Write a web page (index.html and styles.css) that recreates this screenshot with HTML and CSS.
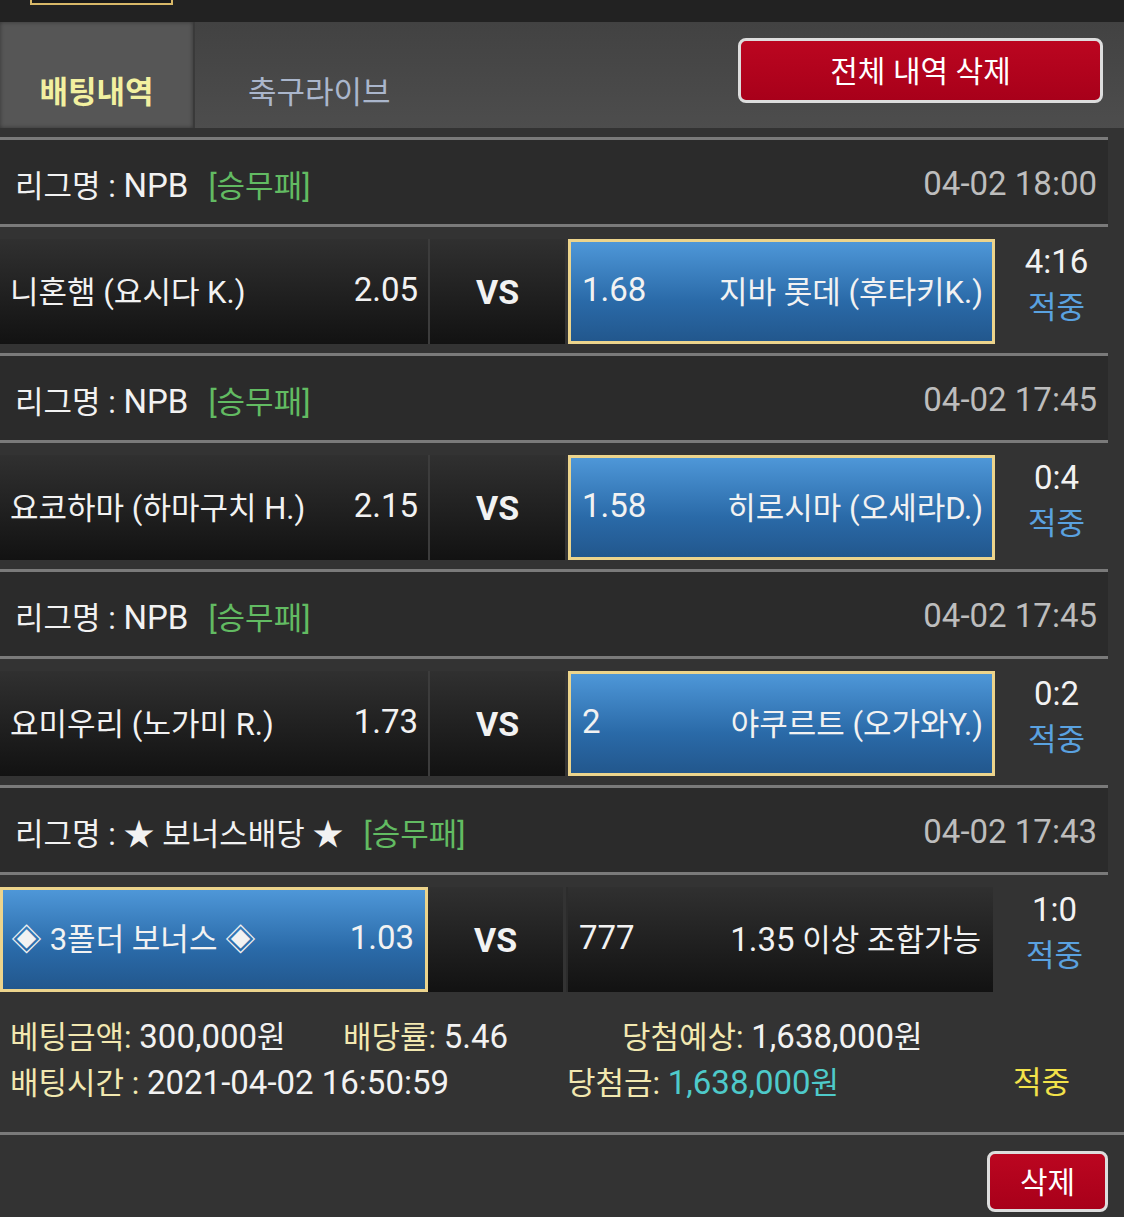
FILE: index.html
```html
<!DOCTYPE html>
<html lang="ko">
<head>
  <meta charset="UTF-8">
  <title>배팅내역</title>
  <link rel="stylesheet" href="styles.css">
</head>
<body>

<div class="topbar">
  <div class="top-box"></div>
</div>

<div class="tabs">
  <div class="tab active">배팅내역</div>
  <div class="tab">축구라이브</div>
  <button class="btn-red btn-all">전체 내역 삭제</button>
</div>

<div class="list">
  <div class="game">
    <div class="league">
      <span>리그명 : <span class="num">NPB</span></span><span class="tag">[승무패]</span>
      <span class="date num">04-02 18:00</span>
    </div>
    <div class="match">
      <div class="cell home"><span>니혼햄 (요시다 K.)</span><span class="num">2.05</span></div>
      <div class="cell vs">VS</div>
      <div class="cell away picked"><span class="num">1.68</span><span>지바 롯데 (후타키K.)</span></div>
      <div class="score"><div class="num">4:16</div><div class="hit">적중</div></div>
    </div>
  </div>

  <div class="game">
    <div class="league">
      <span>리그명 : <span class="num">NPB</span></span><span class="tag">[승무패]</span>
      <span class="date num">04-02 17:45</span>
    </div>
    <div class="match">
      <div class="cell home"><span>요코하마 (하마구치 H.)</span><span class="num">2.15</span></div>
      <div class="cell vs">VS</div>
      <div class="cell away picked"><span class="num">1.58</span><span>히로시마 (오세라D.)</span></div>
      <div class="score"><div class="num">0:4</div><div class="hit">적중</div></div>
    </div>
  </div>

  <div class="game">
    <div class="league">
      <span>리그명 : <span class="num">NPB</span></span><span class="tag">[승무패]</span>
      <span class="date num">04-02 17:45</span>
    </div>
    <div class="match">
      <div class="cell home"><span>요미우리 (노가미 R.)</span><span class="num">1.73</span></div>
      <div class="cell vs">VS</div>
      <div class="cell away picked"><span class="num">2</span><span>야쿠르트 (오가와Y.)</span></div>
      <div class="score"><div class="num">0:2</div><div class="hit">적중</div></div>
    </div>
  </div>

  <div class="game last">
    <div class="league">
      <span>리그명 : ★ 보너스배당 ★</span><span class="tag">[승무패]</span>
      <span class="date num">04-02 17:43</span>
    </div>
    <div class="match">
      <div class="cell home picked"><span>◈ 3폴더 보너스 ◈</span><span class="num">1.03</span></div>
      <div class="cell vs">VS</div>
      <div class="cell away"><span class="num">777</span><span><span class="num">1.35</span> 이상 조합가능</span></div>
      <div class="score"><div class="num">1:0</div><div class="hit">적중</div></div>
    </div>
  </div>
</div>

<div class="summary">
  <div class="sum-line">
    <span class="col-a"><span class="lbl">베팅금액:</span> <span class="num">300,000</span>원</span>
    <span class="col-b"><span class="lbl">배당률:</span> <span class="num">5.46</span></span>
    <span><span class="lbl">당첨예상:</span> <span class="num">1,638,000</span>원</span>
  </div>
  <div class="sum-line">
    <span class="col-c"><span class="lbl">배팅시간 :</span> <span class="num">2021-04-02 16:50:59</span></span>
    <span class="col-d"><span class="lbl">당첨금:</span> <span class="win"><span class="num">1,638,000</span>원</span></span>
    <span class="result">적중</span>
  </div>
</div>

<div class="actions">
  <button class="btn-red btn-del">삭제</button>
</div>

</body>
</html>
```

FILE: styles.css
```css
* {
  box-sizing: border-box;
}

body {
  margin: 0;
  background: #333333;
  color: #f2f2f2;
  font-family: Roboto, "Noto Sans CJK KR", sans-serif;
  font-size: 31px;
}

/* latin runs are set a bit larger than hangul in the original */
.num {
  font-size: 33px;
}

.topbar {
  height: 22px;
  background: #222222;
}

.top-box {
  width: 143px;
  height: 5px;
  margin-left: 30px;
  background: #1a1a1a;
  border: 2px solid #d8b868;
  border-top: none;
}

/* tabs */
.tabs {
  display: flex;
  height: 106px;
  background: linear-gradient(#424242, #4d4d4d);
  margin-bottom: 9px;
}

.tab {
  display: flex;
  align-items: flex-end;
  padding-bottom: 13px;
  line-height: 44px;
  font-size: 31px;
  color: #aab6cc;
}

.tab.active {
  width: 195px;
  justify-content: center;
  background: #565656;
  color: #f2f0a0;
  font-weight: bold;
  border-right: 2px solid #3a3a3a;
  box-shadow: inset 0 0 4px rgba(0,0,0,0.4);
}

.tab + .tab {
  padding-left: 53px;
}

.btn-red {
  background: linear-gradient(#bb0620, #a8001a);
  color: #ffffff;
  border: 3px solid #dddddd;
  border-radius: 8px;
  font-family: Roboto, "Noto Sans CJK KR", sans-serif;
  cursor: pointer;
}

.btn-all {
  margin: 16px 21px 0 auto;
  width: 365px;
  height: 65px;
  font-size: 30px;
  padding-bottom: 4px;
}

/* games */
.game {
  width: 1108px;
  margin-bottom: 9px;
}

.game.last {
  margin-bottom: 0;
}

.league {
  display: flex;
  align-items: center;
  height: 90px;
  padding: 3px 11px 0 15px;
  background: #2b2b2b;
  border-top: 3px solid #7a7a7a;
  border-bottom: 3px solid #7a7a7a;
}

.tag {
  margin-left: 20px;
  color: #62bb62;
}

.date {
  margin-left: auto;
  color: #bdbdbd;
}

.match {
  display: flex;
  padding-top: 12px;
}

.cell {
  display: flex;
  align-items: center;
  justify-content: space-between;
  height: 105px;
  padding-bottom: 5px;
  background: linear-gradient(#303030, #121212);
}

.home {
  width: 430px;
  padding-left: 10px;
  padding-right: 10px;
  border-right: 2px solid #3c3c3c;
}

.vs {
  width: 135px;
  justify-content: center;
  font-weight: bold;
  font-size: 34px;
  padding-top: 0;
  padding-bottom: 0;
}

.away {
  width: 427px;
  margin-left: 3px;
  padding-left: 11px;
  padding-right: 12px;
  border-left: 2px solid #2c2c2c;
}

.picked {
  background: linear-gradient(#4e97d8, #2a6aa8 60%, #22578d);
  border: 3px solid #ecd48c;
}

.home.picked {
  width: 428px;
  padding-left: 8px;
  padding-right: 11px;
}

.away.picked {
  padding-left: 11px;
  padding-right: 9px;
}

.score {
  width: 113px;
  padding-left: 10px;
  text-align: center;
  line-height: 46px;
}

.hit {
  color: #5aa2e0;
}

/* summary */
.summary {
  padding: 22px 0 26px 10px;
  line-height: 45px;
  border-bottom: 3px solid #7a7a7a;
}

.sum-line {
  display: flex;
  white-space: nowrap;
}

.lbl {
  color: #f2e8b0;
}

.col-a {
  width: 333px;
}

.col-b {
  width: 279px;
}

.col-c {
  width: 557px;
}

.col-d {
  width: 446px;
}

.win {
  color: #4ecaca;
}

.result {
  color: #f2e24a;
}

.actions {
  display: flex;
  justify-content: flex-end;
  padding: 16px 16px 0 0;
}

.btn-del {
  width: 121px;
  height: 61px;
  font-size: 30px;
  padding-bottom: 4px;
}
```
